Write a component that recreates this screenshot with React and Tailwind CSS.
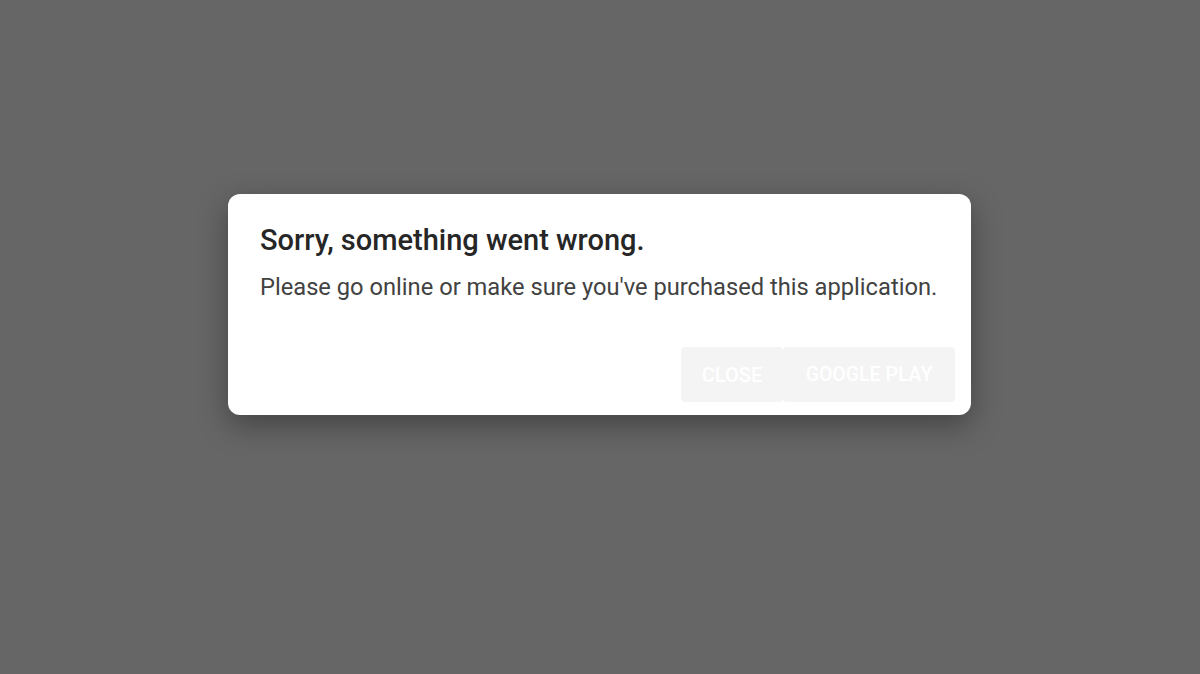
import React from "react";

const App = () => {
  return (
    <div className="w-[1200px] h-[674px] bg-[#666666] flex items-center justify-center font-['Roboto',sans-serif]">
      <div className="w-[743px] h-[221px] mb-[65px] mr-[1px] bg-white rounded-[12px] shadow-[0_10px_30px_rgba(0,0,0,0.35)] flex flex-col">
        <div className="px-[32px] pt-[28px]">
          <h2 className="text-[29px] leading-[36px] font-medium text-[#262626] whitespace-nowrap">
            Sorry, something went wrong.
          </h2>
          <p className="mt-[13px] text-[23.7px] leading-[32px] text-[#424242] whitespace-nowrap">
            Please go online or make sure you've purchased this application.
          </p>
        </div>
        <div className="mt-auto flex justify-end pr-[16px] pb-[13px]">
          <button className="h-[55px] w-[102px] rounded-[4px] bg-[#f4f4f4] text-white text-[20px] font-medium uppercase">
            Close
          </button>
          <button className="h-[55px] w-[172px] rounded-[4px] bg-[#f4f4f4] text-white text-[19.5px] font-medium uppercase">
            Google Play
          </button>
        </div>
      </div>
    </div>
  );
};

export default App;
